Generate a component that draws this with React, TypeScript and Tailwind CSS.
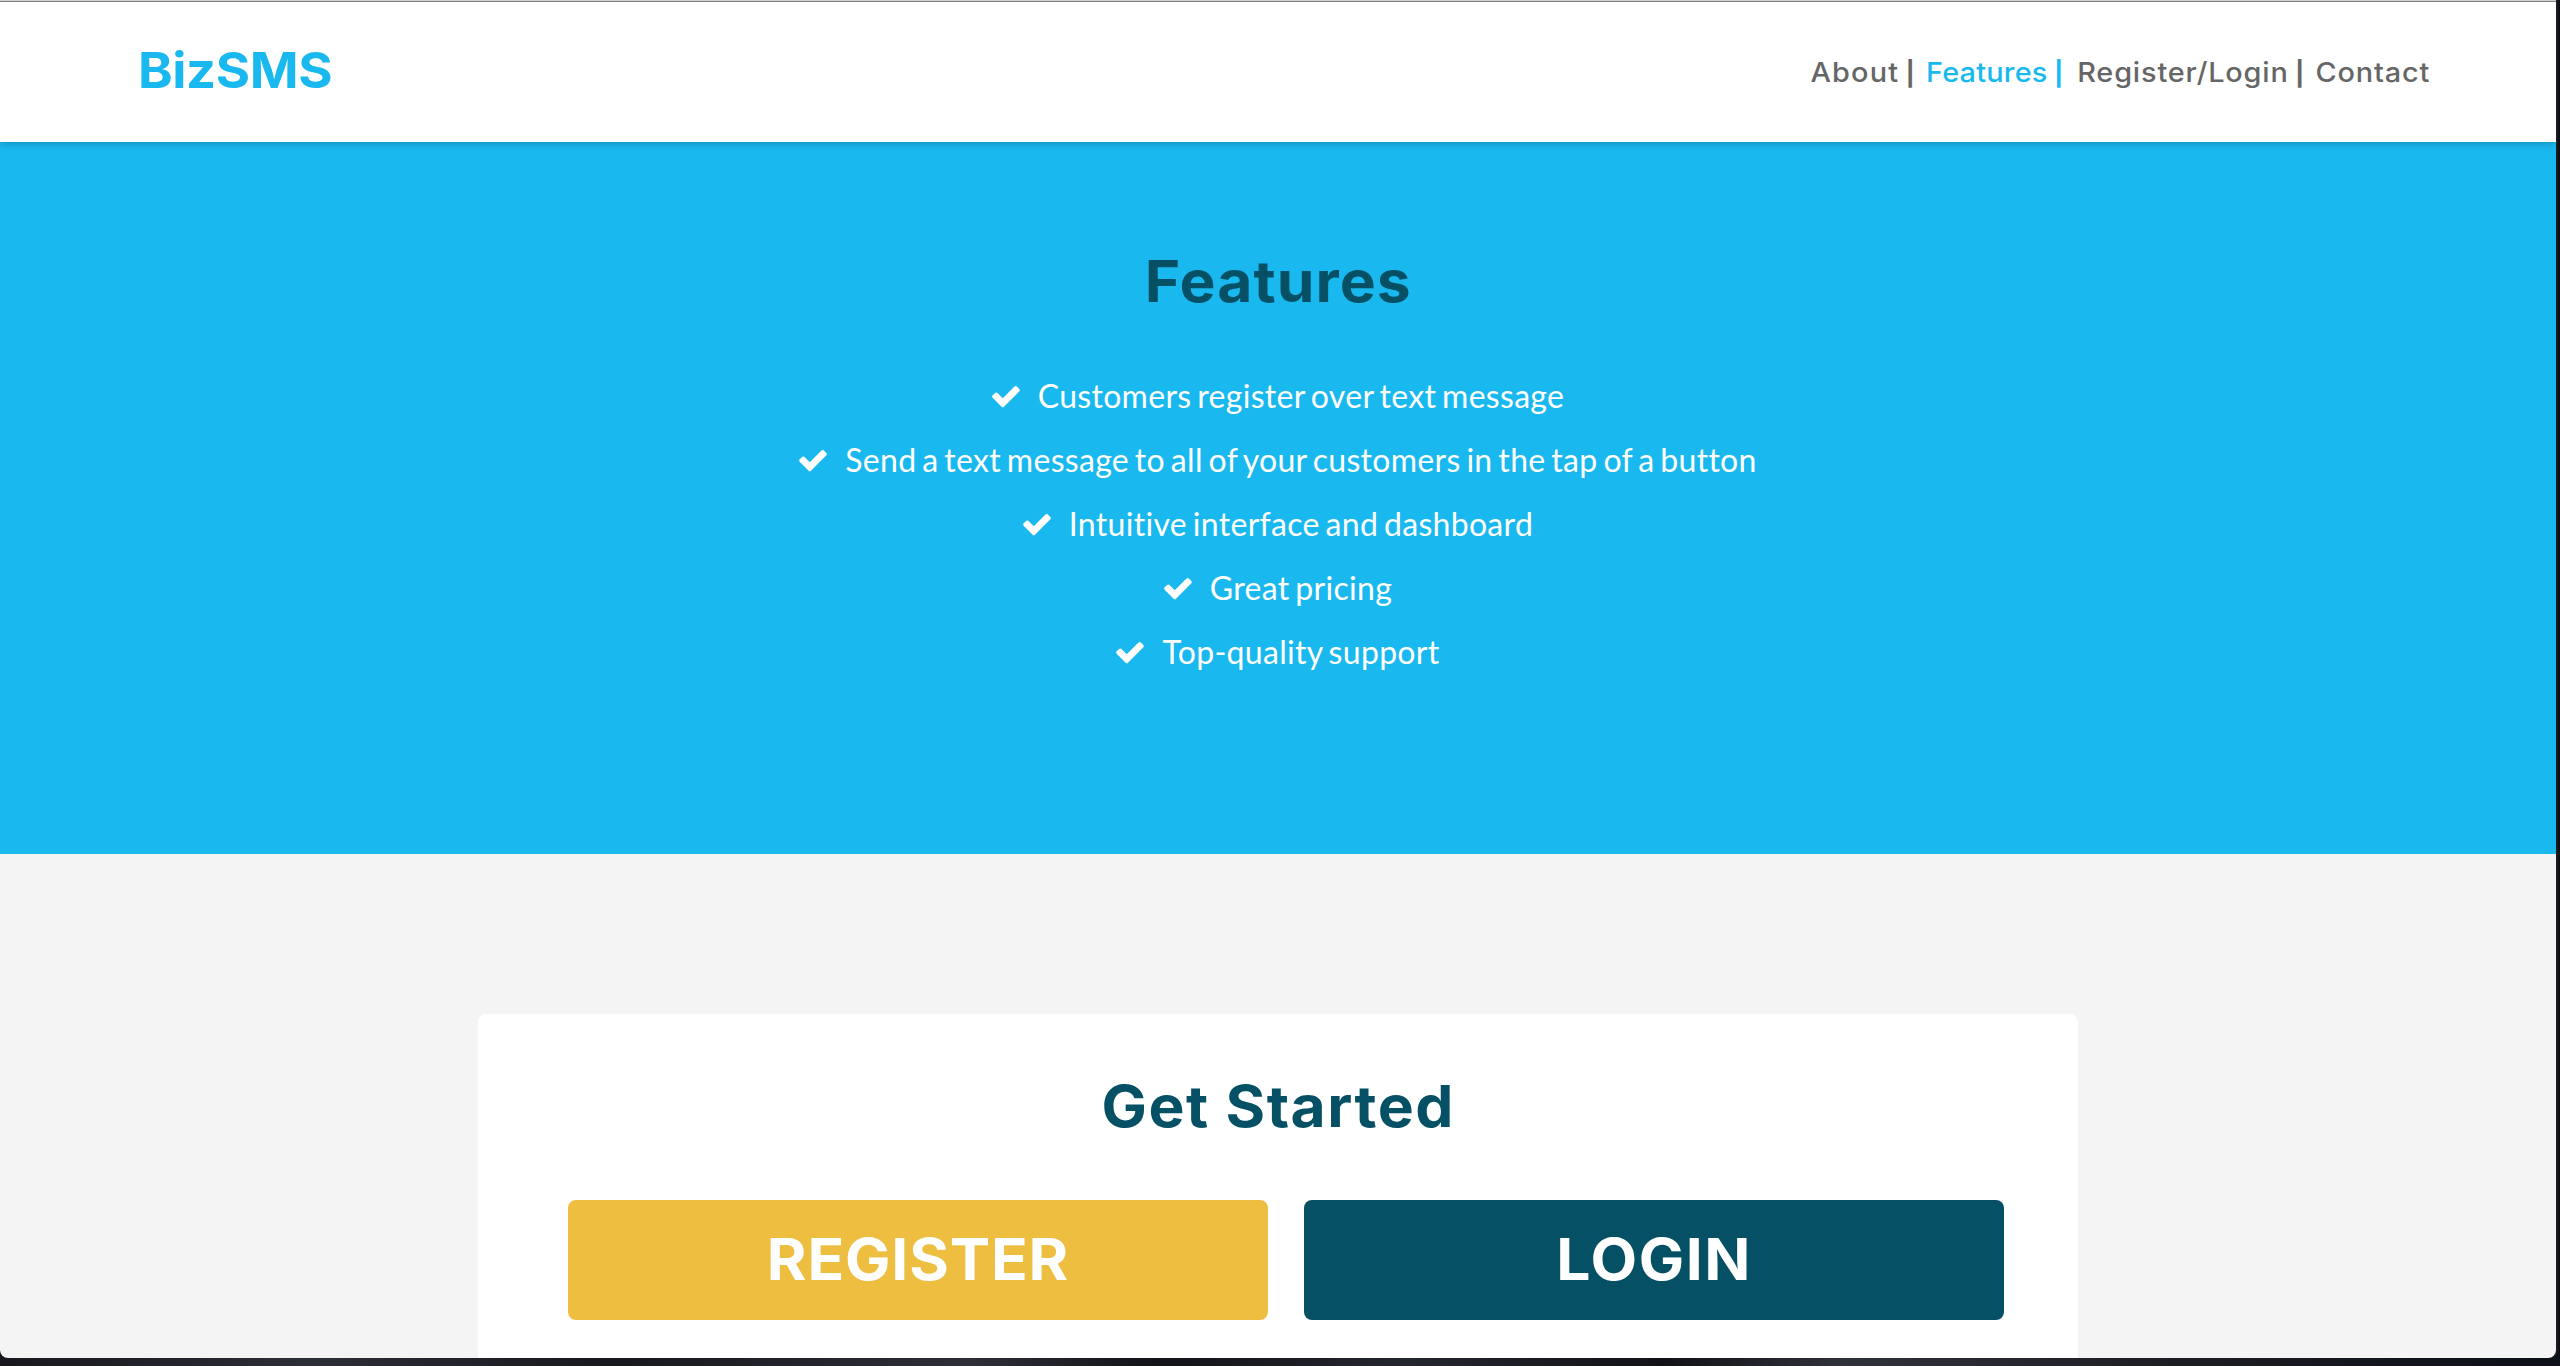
import clsx from "clsx";

const NAV_ITEMS = [
  { label: "About", active: false, className: "w-[110px] tracking-[1.1px]" },
  { label: "Features", active: true, className: "w-[144px] tracking-[0.2px]" },
  { label: "Register/Login", active: false, className: "w-[227px] tracking-[0.8px]" },
  { label: "Contact", active: false, className: "tracking-[0.8px]" },
];

const FEATURES = [
  "Customers register over text message",
  "Send a text message to all of your customers in the tap of a button",
  "Intuitive interface and dashboard",
  "Great pricing",
  "Top-quality support",
];

function CheckIcon() {
  return (
    <svg viewBox="0 0 1792 1792" className="mr-4 size-8 shrink-0" fill="currentColor">
      <path d="M1671 566q0 40-28 68l-724 724-136 136q-28 28-68 28t-68-28l-136-136-362-362q-28-28-28-68t28-68l136-136q28-28 68-28t68 28l294 295 656-657q28-28 68-28t68 28l136 136q28 28 28 68z" />
    </svg>
  );
}

function Header() {
  return (
    <header className="relative z-10 flex h-[141px] items-start justify-between border-t border-[#808080] bg-white pl-[138px] shadow-[0_0_10px_rgba(0,0,0,0.3)]">
      <a className="mt-[38px] origin-left scale-x-105 text-[50px] leading-[60px] font-bold tracking-[-0.4px] text-[#19b9f0]">
        BizSMS
      </a>
      <nav className="mt-[50px] mr-[126px] flex origin-right scale-x-105 text-[27.5px] leading-[40px] font-medium text-[#666]">
        {NAV_ITEMS.map((item, i) => (
          <div
            key={item.label}
            className={clsx(
              "flex items-baseline whitespace-nowrap",
              item.className,
              item.active && "text-[#19b9f0]",
            )}
          >
            <a>{item.label}</a>
            {i < NAV_ITEMS.length - 1 && (
              <span className="ml-1.5 text-[24px] font-bold tracking-normal">|</span>
            )}
          </div>
        ))}
      </nav>
    </header>
  );
}

export default function App() {
  return (
    <div className="h-[1366px] w-[2560px] overflow-hidden bg-[linear-gradient(90deg,#17171c,#2c2e36_12%,#17181d_24%,#2e2e37_38%,#121317_45%,#24262e_55%,#111216_65%,#30323b_72%,#1c1d22_85%,#0b0f18)] font-['Inter',sans-serif]">
      <div className="h-[1358px] w-[2556px] overflow-hidden rounded-b-lg border-t border-[#cfcfcf] bg-[#f4f4f4] shadow-[2px_0_0_#1c1c1c]">
        <Header />

        <section className="flex h-[712px] flex-col items-center bg-[#19b9f0] pt-[103px]">
          <h2 className="scale-x-105 text-[57.7px] leading-[72px] font-bold tracking-[1px] text-[#065066]">
            Features
          </h2>
          <ul className="mt-[47px] -ml-0.5 font-['Lato',sans-serif] text-[32px] leading-[64px] tracking-[0.3px] text-white [word-spacing:-2.65px]">
            {FEATURES.map((feature) => (
              <li key={feature} className="flex items-center justify-center">
                <CheckIcon />
                <span>{feature}</span>
              </li>
            ))}
          </ul>
        </section>

        <section className="pt-40">
          <div className="mx-auto flex h-[400px] w-[1600px] flex-col items-center rounded-lg bg-white pt-14">
            <h2 className="scale-x-105 text-[57.7px] leading-[72px] font-bold tracking-[1.4px] text-[#065066]">
              Get Started
            </h2>
            <div className="mt-[58px] ml-4 flex gap-9 text-[57.7px] font-bold text-white">
              <button className="h-[120px] w-[700px] rounded-lg bg-[#edbe3f] pb-0.5">
                <span className="inline-block scale-x-105 tracking-[0.8px]">REGISTER</span>
              </button>
              <button className="h-[120px] w-[700px] rounded-lg bg-[#065066] pb-0.5">
                <span className="inline-block scale-x-105 tracking-[1.5px]">LOGIN</span>
              </button>
            </div>
          </div>
        </section>
      </div>
    </div>
  );
}
